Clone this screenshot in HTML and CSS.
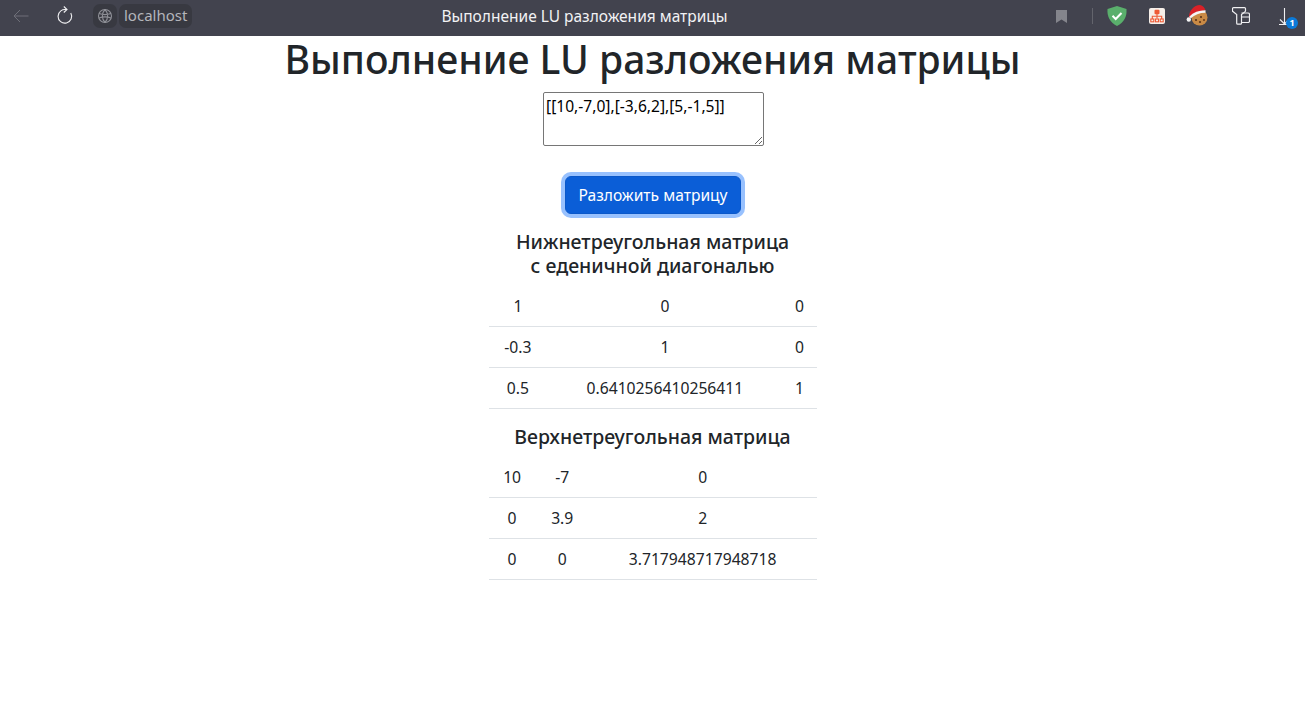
FILE: index.html
```html
<!DOCTYPE html>
<html lang="ru">
<head>
    <meta charset="UTF-8">
    <title>Выполнение LU разложения матрицы</title>
    <link rel="stylesheet" href="styles.css">
</head>
<body>
    <header class="topbar">
        <div class="nav">
            <svg class="back" width="20" height="20" viewBox="0 0 20 20"><path d="M17.500 10H3M9 4L3 10l6 6" fill="none" stroke="#6e6f78" stroke-width="1"/></svg>
            <svg class="reload" width="20" height="20" viewBox="0 0 20 20"><path d="M11.800 3.800A6.800 6.800 0 1 0 15.800 7M8.800 .500l3.200 3-3.200 3" fill="none" stroke="#f0f0f2" stroke-width="1.100"/></svg>
            <div class="site-icon">
                <svg width="16" height="16" viewBox="0 0 16 16" fill="none" stroke="#8f9097" stroke-width="1.100"><circle cx="8" cy="8" r="6.500"/><path d="M2 5.500c4 1.500 8 1.500 12 0M2 10c4-1.500 8-1.500 12 0M8 1.500C4.500 5 4.500 11 8 14.500M8 1.500c3.500 3.500 3.500 9.500 0 13"/></svg>
            </div>
            <div class="address">localhost</div>
        </div>
        <div class="page-title">Выполнение LU разложения матрицы</div>
        <div class="tools">
            <svg class="bookmark" width="11" height="13" viewBox="0 0 11 13"><path d="M0 0h11v13L5.500 9.500 0 13z" fill="#84858c"/></svg>
            <span class="divider"></span>
            <svg class="shield" width="20" height="20" viewBox="0 0 20 20"><path d="M10 0L19.500 3c.5 7.500-2 13-9.500 17C2.500 16 0 10.500.500 3z" fill="#5aaf6c"/><path d="M5.500 9.800l3.200 3.200 5.800-6" fill="none" stroke="#fff" stroke-width="2"/></svg>
            <svg class="sitemap" width="16" height="16" viewBox="0 0 16 16"><rect width="16" height="16" rx="2" fill="#f6efe9"/><g fill="none" stroke="#ee5a35" stroke-width="1.100"><path d="M8 6v4.500M3.300 11V8.300h9.400V11"/><rect x="1.800" y="11" width="3" height="2.800"/><rect x="6.500" y="11" width="3" height="2.800"/><rect x="11.200" y="11" width="3" height="2.800"/></g><rect x="5.500" y="1.800" width="5" height="4.400" rx="1" fill="#ee5a35"/></svg>
            <svg class="cookie" width="22" height="22" viewBox="0 0 22 22"><circle cx="13.500" cy="12.500" r="8" fill="#c98a45"/><circle cx="10" cy="15" r="1.100" fill="#5b3418"/><circle cx="15" cy="12" r="1.100" fill="#5b3418"/><circle cx="14" cy="17" r="1.100" fill="#5b3418"/><circle cx="18" cy="15" r=".9" fill="#5b3418"/><path d="M3 13C2.500 6 8 0 14 0c3 .5 5 3 5.500 5.500C13 5.500 8 8 5 12z" fill="#d92127"/><circle cx="2.800" cy="14.500" r="2.200" fill="#f4f4f4"/><path d="M4 12.500C8 8.500 13 6.500 19.500 6.500" fill="none" stroke="#f4f4f4" stroke-width="2.400"/></svg>
            <svg class="extensions" width="18" height="18" viewBox="0 0 18 18" fill="none" stroke="#f0f0f2" stroke-width="1.200"><path d="M1.500.600h11a1 1 0 0 1 1 1v2.200a1 1 0 0 1-.4.800L9.500 7.500v8.700a1 1 0 0 1-1 1H5.700a1 1 0 0 1-1-1V7.500L.900 4.600a1 1 0 0 1-.4-.8V1.600a1 1 0 0 1 1-1z"/><path d="M9.500 6h6.500a1.500 1.500 0 0 1 1.500 1.500v6.500a1.500 1.500 0 0 1-1.500 1.500H9.500M9.500 10h8"/></svg>
            <div class="downloads">
                <svg width="16" height="20" viewBox="0 0 16 20" fill="none" stroke="#f0f0f2" stroke-width="1.100"><path d="M7.500 0v16M3 11.500L7.500 16l4.500-4.500M2 16.500h11"/></svg>
                <span class="badge">1</span>
            </div>
        </div>
    </header>

    <main class="content">
        <h1>Выполнение LU разложения матрицы</h1>
        <textarea class="matrix-input">[[10,-7,0],[-3,6,2],[5,-1,5]]</textarea>
        <button class="btn">Разложить матрицу</button>

        <h5>Нижнетреугольная матрица<br>с еденичной диагональю</h5>
        <table class="lower">
            <tr><td>1</td><td>0</td><td>0</td></tr>
            <tr><td>-0.3</td><td>1</td><td>0</td></tr>
            <tr><td>0.5</td><td>0.6410256410256411</td><td>1</td></tr>
        </table>

        <h5>Верхнетреугольная матрица</h5>
        <table class="upper">
            <tr><td>10</td><td>-7</td><td>0</td></tr>
            <tr><td>0</td><td>3.9</td><td>2</td></tr>
            <tr><td>0</td><td>0</td><td>3.717948717948718</td></tr>
        </table>
    </main>
</body>
</html>
```
FILE: styles.css
```css
body {
    margin: 0;
    font-family: "Noto Sans", sans-serif;
    font-size: 16px;
    color: #212529;
    background-color: #fff;
}

.topbar {
    display: flex;
    align-items: center;
    box-sizing: border-box;
    height: 36px;
    padding-bottom: 4px;
    background-color: #42434e;
}

.nav {
    display: flex;
    align-items: center;
    padding-left: 11px;
}

.back {
    margin-right: 24px;
}

.reload {
    margin-right: 18px;
}

.site-icon {
    display: flex;
    align-items: center;
    justify-content: center;
    width: 24px;
    height: 24px;
    border-radius: 7px;
    background-color: #383941;
    margin-right: 2px;
}

.address {
    height: 24px;
    line-height: 23px;
    padding: 0 5px;
    border-radius: 7px;
    background-color: #383941;
    color: #b4b5bb;
    font-size: 15px;
}

.page-title {
    margin-left: 249px;
    color: #f2f2f4;
    font-size: 15.5px;
}

.tools {
    display: flex;
    align-items: center;
    margin-left: auto;
    padding-right: 12px;
}

.bookmark {
    margin-right: 25px;
}

.divider {
    width: 1px;
    height: 16px;
    background-color: #63646c;
    margin-right: 14px;
}

.shield {
    margin-right: 22px;
}

.sitemap {
    margin-right: 21px;
}

.cookie {
    margin-right: 24px;
}

.extensions {
    margin-right: 27px;
}

.downloads {
    position: relative;
    display: flex;
    margin-top: 4px;
}

.badge {
    position: absolute;
    left: 9px;
    top: 9px;
    width: 12px;
    height: 12px;
    border-radius: 50%;
    background-color: #0b7ad8;
    color: #fff;
    font-size: 9px;
    font-weight: 700;
    line-height: 12px;
    text-align: center;
}

.content {
    display: flex;
    flex-direction: column;
    align-items: center;
    text-align: center;
}

h1 {
    margin: 0 0 10px;
    font-size: 39.1px;
    font-weight: 500;
    line-height: 46px;
}

.matrix-input {
    box-sizing: border-box;
    width: 221px;
    height: 54px;
    margin-left: 2px;
    padding: 3px 2px;
    font-family: inherit;
    font-size: 15.6px;
    line-height: 20px;
    border: 1px solid #767676;
    border-radius: 2px;
    color: #000;
}

.btn {
    margin-top: 30px;
    margin-left: 1px;
    height: 38px;
    padding: 0 12.5px;
    font-family: inherit;
    font-size: 15.6px;
    color: #fff;
    background-color: #0b5ed7;
    border: 1px solid #0a58ca;
    border-radius: 6px;
    box-shadow: 0 0 0 4px rgba(49, 132, 253, 0.5);
}

h5 {
    margin: 0 0 8px;
    font-size: 19.5px;
    font-weight: 500;
    line-height: 24px;
}

.btn + h5 {
    margin-top: 16px;
}

table + h5 {
    margin-top: 16px;
}

table {
    width: 328px;
    border-collapse: collapse;
}

td {
    height: 40px;
    padding: 0 8px;
    border-bottom: 1px solid #dee2e6;
    color: #212529;
    font-size: 15.7px;
}
```
